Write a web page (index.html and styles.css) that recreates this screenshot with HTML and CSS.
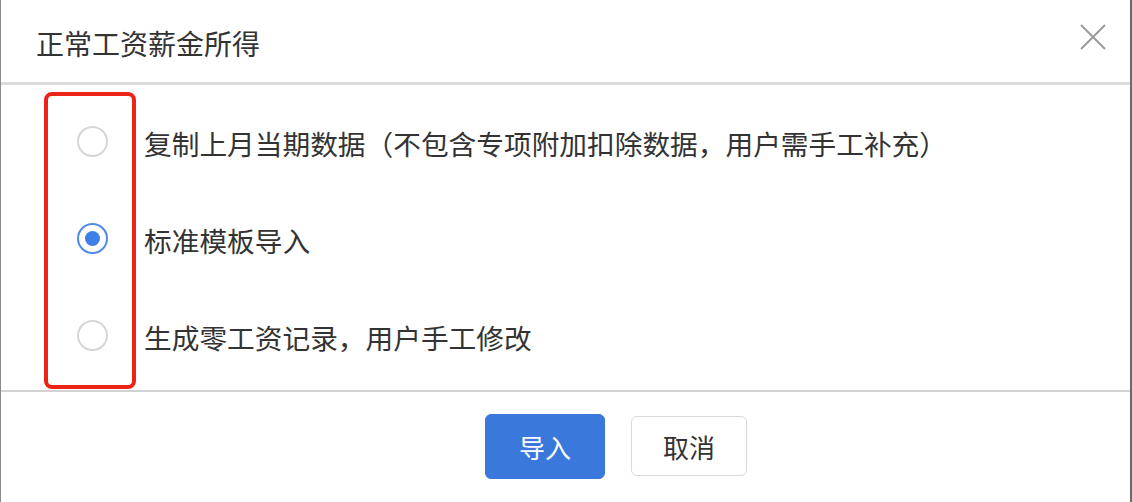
FILE: index.html
```html
<!DOCTYPE html>
<html lang="zh-CN">
<head>
    <meta charset="UTF-8">
    <meta name="viewport" content="width=device-width, initial-scale=1.0">
    <title>正常工资薪金所得</title>
    <link rel="stylesheet" href="styles.css">
</head>
<body>
    <div class="dialog">
        <div class="dialog-header">
            <h1>正常工资薪金所得</h1>
            <button class="close" aria-label="关闭">
                <svg width="26" height="26" viewBox="0 0 26 26">
                    <path d="M1 1 L25 25 M25 1 L1 25" stroke="#9a9a9a" stroke-width="2" fill="none"/>
                </svg>
            </button>
        </div>

        <div class="dialog-body">
            <label class="option">
                <input type="radio" name="mode">
                <span class="radio"></span>
                <span class="text">复制上月当期数据（不包含专项附加扣除数据，用户需手工补充）</span>
            </label>
            <label class="option">
                <input type="radio" name="mode" checked>
                <span class="radio"></span>
                <span class="text">标准模板导入</span>
            </label>
            <label class="option">
                <input type="radio" name="mode">
                <span class="radio"></span>
                <span class="text">生成零工资记录，用户手工修改</span>
            </label>

            <!-- 标注框 -->
            <div class="highlight"></div>
        </div>

        <div class="dialog-footer">
            <button class="btn btn-primary">导入</button>
            <button class="btn">取消</button>
        </div>
    </div>
</body>
</html>
```

FILE: styles.css
```css
body {
    margin: 0;
    font-family: "Noto Sans CJK SC", "Liberation Sans", sans-serif;
    background: #fff;
    color: #333;
}
.dialog {
    width: 1132px;
    height: 502px;
    box-sizing: border-box;
    border-left: 1px solid #8a8a8a;
    border-right: 2px solid #6a6a6a;
    display: flex;
    flex-direction: column;
}
.dialog-header {
    height: 82px;
    border-bottom: 3px solid #dcdcdf;
    display: flex;
    align-items: center;
    justify-content: space-between;
    padding: 0 24px 0 35px;
    flex-shrink: 0;
}
.dialog-header h1 {
    margin: 0;
    font-size: 28px;
    font-weight: normal;
    color: #333;
    line-height: 1;
    position: relative;
    top: 2px;
}
.close {
    background: none;
    border: none;
    padding: 0;
    width: 26px;
    height: 26px;
    cursor: pointer;
    position: relative;
    top: -4px;
}
.close svg {
    display: block;
}
.dialog-body {
    position: relative;
    height: 305px;
    box-sizing: border-box;
    padding-top: 8px;
    flex-shrink: 0;
}
.option {
    display: flex;
    align-items: center;
    height: 97px;
    padding-left: 76px;
    cursor: pointer;
}
.option input {
    display: none;
}
.radio {
    width: 31px;
    height: 31px;
    box-sizing: border-box;
    border: 2px solid #d6d6d6;
    border-radius: 50%;
    display: flex;
    align-items: center;
    justify-content: center;
    flex-shrink: 0;
}
.option input:checked + .radio {
    border-color: #4f8ae8;
}
.option input:checked + .radio::after {
    content: "";
    width: 15px;
    height: 15px;
    border-radius: 50%;
    background: #3f7fe8;
}
.text {
    margin-left: 36px;
    font-size: 27.7px;
    color: #333;
    line-height: 1;
    position: relative;
    top: 2px;
}
.highlight {
    position: absolute;
    left: 43px;
    top: 7px;
    width: 92px;
    height: 297px;
    box-sizing: border-box;
    border: 4px solid #ee2317;
    border-radius: 8px;
}
.dialog-footer {
    flex: 1;
    border-top: 2px solid #d2d2d2;
    display: flex;
    align-items: center;
    gap: 26px;
    padding-left: 484px;
    padding-bottom: 2px;
}
.btn {
    width: 116px;
    height: 60px;
    font-family: inherit;
    font-size: 26px;
    color: #333;
    background: #fff;
    border: 1px solid #d9d9d9;
    border-radius: 6px;
    cursor: pointer;
    padding: 0;
}
.btn-primary {
    width: 120px;
    height: 65px;
    background: #3a78db;
    border-color: #3a78db;
    color: #fff;
}
```
